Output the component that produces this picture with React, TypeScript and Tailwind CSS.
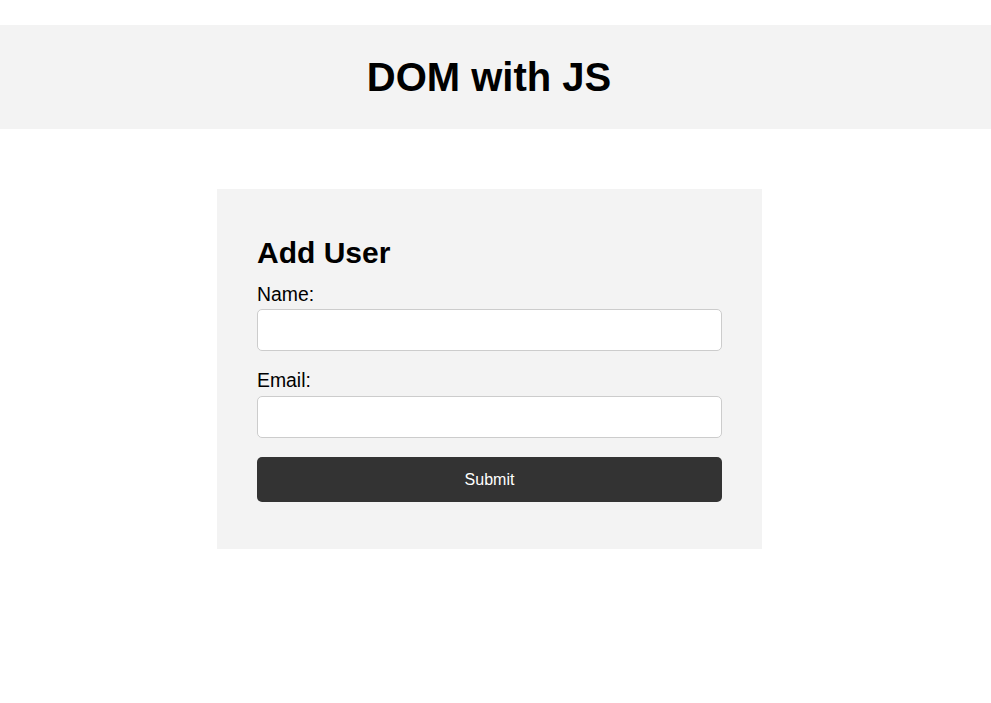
import React from "react";

export default function App() {
  return (
    <div
      className="min-h-[703px] bg-white text-black"
      style={{ fontFamily: '"Liberation Sans", Arial, sans-serif' }}
    >
      <header className="mt-[25px] flex h-[104px] items-center justify-center bg-[#f3f3f3] pr-[13px]">
        <h1 className="text-[40px] font-bold leading-[1.15]">DOM with JS</h1>
      </header>
      <div className="w-[979px]">
        <div className="mx-auto mt-[60px] w-[545px] bg-[#f3f3f3] px-[40px] pt-[47px] pb-[47px]">
          <h2 className="text-[30px] font-bold leading-[1.15]">Add User</h2>
          <form className="flex flex-col" onSubmit={(e) => e.preventDefault()}>
            <label className="mt-[12px] block text-[19.4px] leading-[1.15]">Name:</label>
            <input
              type="text"
              className="mt-[4px] h-[42px] w-full rounded-[5px] border border-[#cccccc] bg-white px-[10px] text-[16px] outline-none"
            />
            <label className="mt-[18px] block text-[19.4px] leading-[1.15]">Email:</label>
            <input
              type="email"
              className="mt-[5px] h-[42px] w-full rounded-[5px] border border-[#cccccc] bg-white px-[10px] text-[16px] outline-none"
            />
            <button
              type="submit"
              className="mt-[19px] h-[45px] w-full rounded-[5px] bg-[#333333] text-[16px] text-white"
            >
              Submit
            </button>
          </form>
        </div>
      </div>
    </div>
  );
}
